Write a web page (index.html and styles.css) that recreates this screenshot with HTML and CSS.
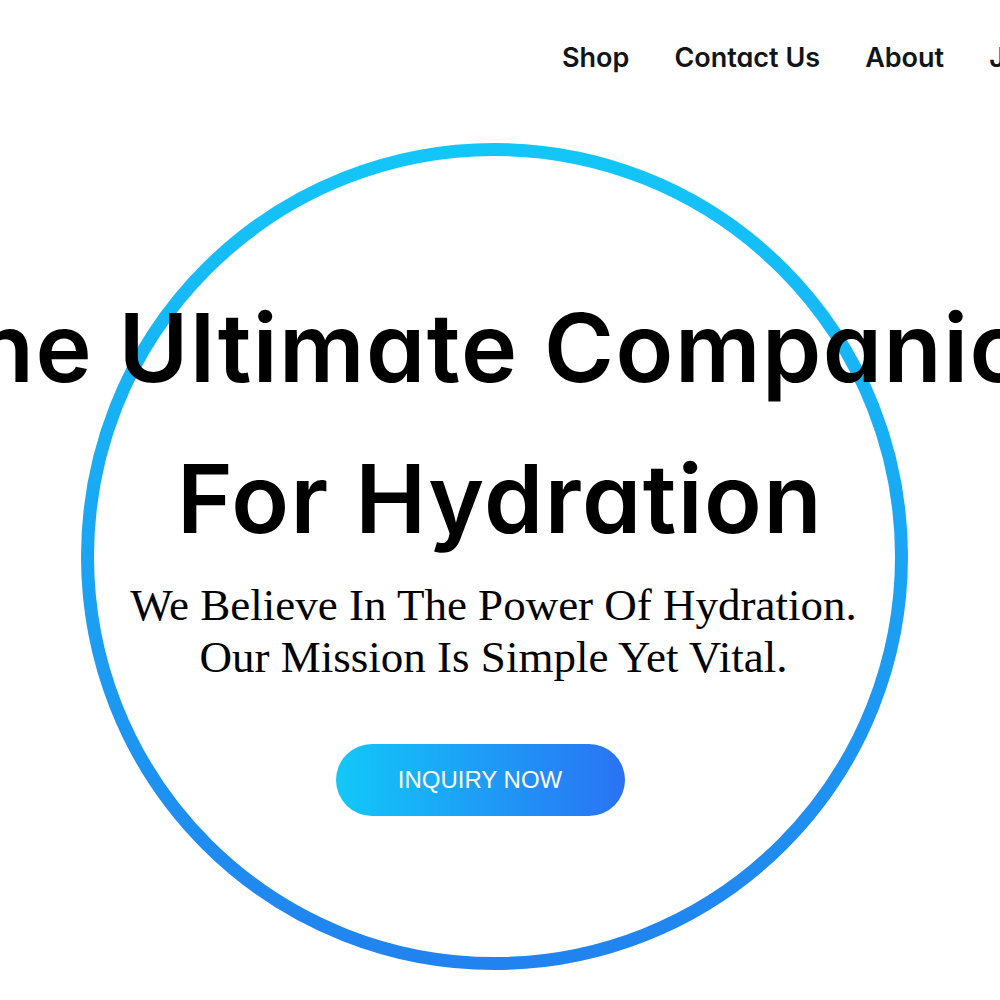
FILE: index.html
```html
<!DOCTYPE html>
<html lang="en">
<head>
<meta charset="utf-8">
<title>The Ultimate Companion For Hydration</title>
<link rel="stylesheet" href="styles.css">
</head>
<body>
<header class="topbar">
  <nav class="nav">
    <a class="nav-link" href="#">Shop</a>
    <a class="nav-link" href="#">Contact Us</a>
    <a class="nav-link" href="#">About</a>
    <a class="nav-link" href="#">Join</a>
  </nav>
</header>
<main class="hero">
  <svg class="ring" viewBox="0 0 827 827" aria-hidden="true">
    <defs>
      <linearGradient id="ringGrad" x1="0" y1="0" x2="0" y2="1">
        <stop offset="0" stop-color="#13c6f8"/>
        <stop offset="1" stop-color="#2183ef"/>
      </linearGradient>
    </defs>
    <circle cx="413.5" cy="413.5" r="407" fill="none" stroke="url(#ringGrad)" stroke-width="13"/>
  </svg>
  <div class="hero-content">
    <h1 class="title">
      <span class="title-line">The Ultimate Companion</span>
      <span class="title-line">For Hydration</span>
    </h1>
    <p class="lead">We Believe In The Power Of Hydration.<br>Our Mission Is Simple Yet Vital.</p>
    <a class="cta" href="#">INQUIRY NOW</a>
  </div>
</main>
</body>
</html>
```

FILE: styles.css
```css
html, body {
  margin: 0;
  padding: 0;
  overflow: hidden;
  background: #ffffff;
}

body {
  width: 1000px;
  height: 1000px;
  font-family: "Inter", "Noto Sans", sans-serif;
  color: #000;
}

.topbar {
  display: flex;
  padding: 40px 0 0 562px;
  height: 60px;
  box-sizing: content-box;
}

.nav {
  display: flex;
  gap: 45px;
  white-space: nowrap;
}

.nav-link {
  font-family: "Inter", sans-serif;
  font-weight: 600;
  font-size: 27px;
  line-height: 36px;
  color: #111418;
  text-decoration: none;
  font-feature-settings: "cv11";
}

.hero {
  position: relative;
  height: 900px;
}

.ring {
  position: absolute;
  left: 81px;
  top: 43px;
  width: 827px;
  height: 827px;
}

.hero-content {
  position: relative;
  display: flex;
  flex-direction: column;
  align-items: center;
  padding-top: 172px;
}

.title {
  margin: 0;
  display: flex;
  flex-direction: column;
  align-items: center;
  font-family: "Inter", sans-serif;
  font-weight: 600;
  font-size: 95px;
  line-height: 151px;
  letter-spacing: 1.5px;
  white-space: nowrap;
  width: 1000px;
  font-feature-settings: "cv11";
}

.title-line {
  display: block;
}

.lead {
  margin: 5px 0 0 -13px;
  font-family: "Liberation Serif", "Times New Roman", serif;
  font-size: 45px;
  line-height: 52px;
  text-align: center;
}

.cta {
  display: flex;
  align-items: center;
  justify-content: center;
  margin: 61px 0 0 -40px;
  width: 289px;
  height: 72px;
  border-radius: 36px;
  background: linear-gradient(90deg, #12c8f8 0%, #2a72f4 100%);
  font-family: "Liberation Sans", Arial, sans-serif;
  font-size: 24px;
  color: #ffffff;
  text-decoration: none;
}
```
